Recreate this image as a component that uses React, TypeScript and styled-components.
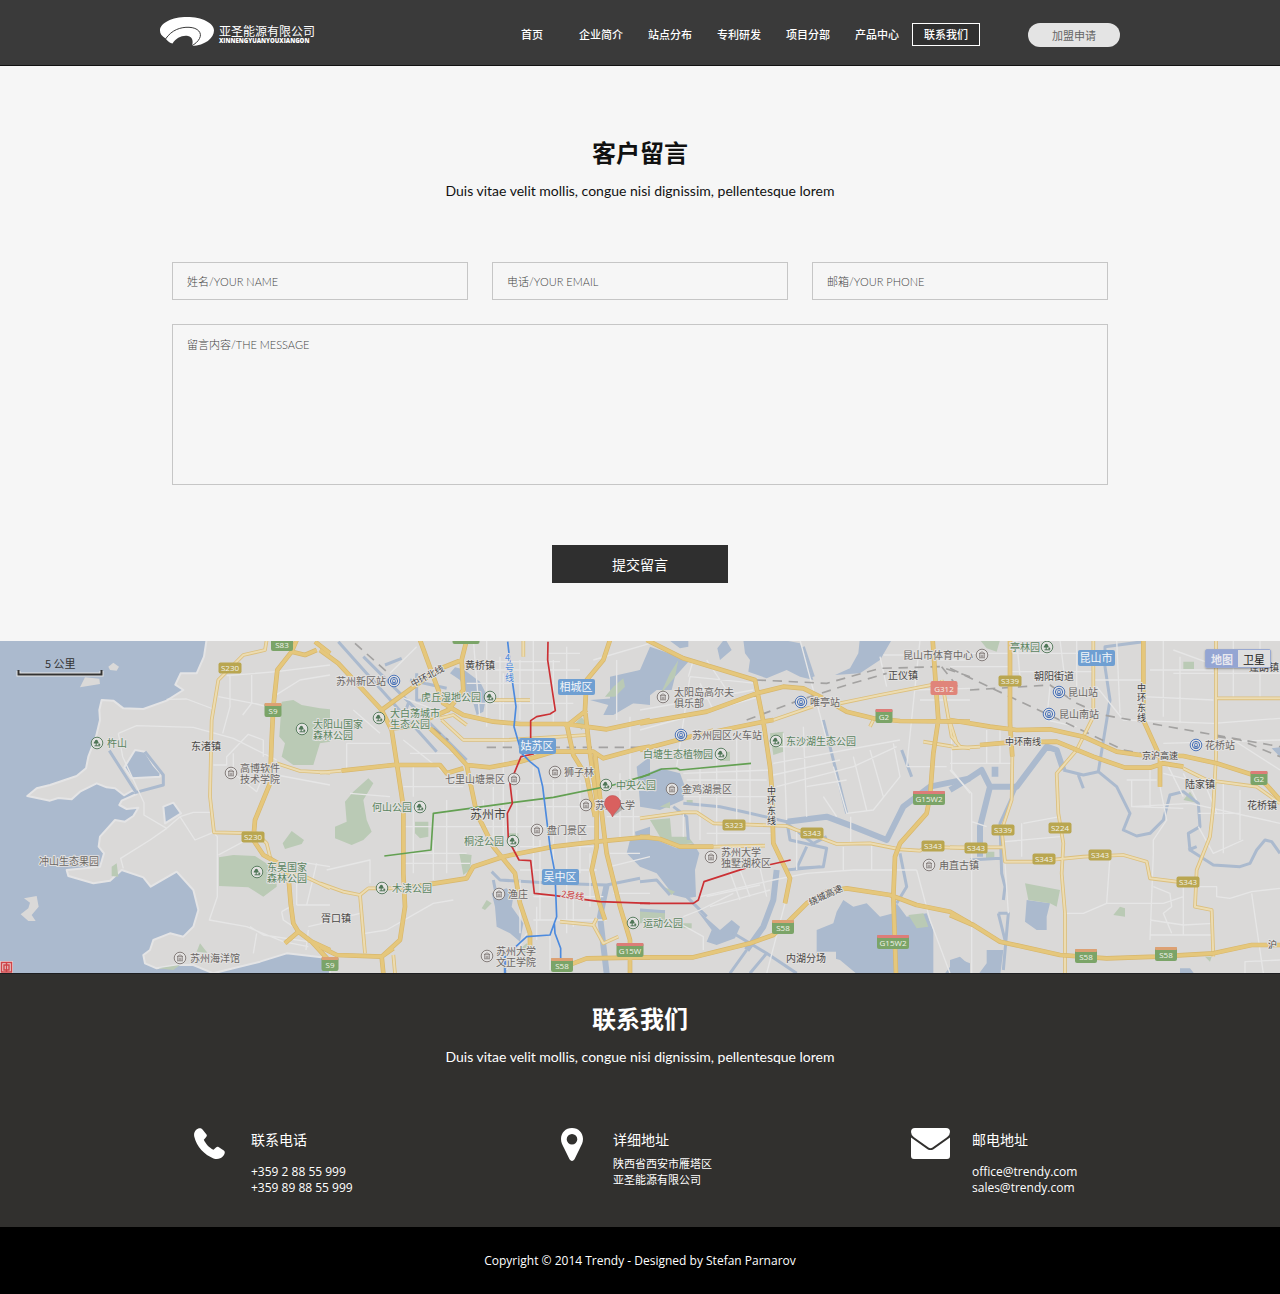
import React from "react";
import styled, { createGlobalStyle } from "styled-components";

const cjk = '"Noto Sans CJK SC", sans-serif';

const GlobalStyle = createGlobalStyle`
  *, *::before, *::after { box-sizing: border-box; }
  body {
    margin: 0;
    background: #000;
    font-family: "Open Sans", ${cjk};
    color: #111;
  }
  h1, h2, h3, p, ul { margin: 0; padding: 0; }
  button, input, textarea { font: inherit; }
  a { color: inherit; text-decoration: none; }
`;

/* ---------- header ---------- */

const Header = styled.header`
  display: flex;
  justify-content: center;
  height: 66px;
  background: #3a3a3a;
  border-bottom: 1px solid #111;
`;

const HeaderInner = styled.div`
  display: flex;
  align-items: center;
  width: 100%;
  max-width: 960px;
  padding-top: 4px;
`;

const Brand = styled.a`
  display: flex;
  align-items: center;
  gap: 5px;
  margin: 0 auto 6px 0;
  color: #fff;
`;

const BrandText = styled.span`
  display: flex;
  flex-direction: column;
  padding-top: 4px;
`;

const BrandName = styled.span`
  font: 12px/15px ${cjk};
`;

const BrandLatin = styled.span`
  font: 800 6px/7px "Open Sans", sans-serif;
`;

const Nav = styled.nav`
  display: flex;
  gap: 1px;
`;

const NavLink = styled.a<{ $active?: boolean }>`
  display: flex;
  align-items: center;
  justify-content: center;
  width: 68px;
  height: 23px;
  padding-bottom: 1px;
  border: 1px solid ${(p) => (p.$active ? "#fff" : "transparent")};
  background: ${(p) => (p.$active ? "#2f2f2f" : "none")};
  color: #fff;
  font: 500 11px/16px ${cjk};
`;

const JoinButton = styled.button`
  width: 92px;
  height: 24px;
  margin-left: 48px;
  padding: 0;
  border: 0;
  border-radius: 12px;
  background: #e4e4e4;
  color: #666;
  font: 11px/16px ${cjk};
  cursor: pointer;
`;

/* ---------- message form ---------- */

const SectionTitle = styled.h2`
  font: 700 24px/36px ${cjk};
  text-align: center;
`;

const SectionLead = styled.p`
  margin-top: 11px;
  font: 14px/20px Lato, sans-serif;
  text-align: center;
`;

const MessageSection = styled.section`
  padding: 68px 24px 58px;
  background: #f6f6f6;
`;

const Form = styled.form`
  display: grid;
  grid-template-columns: repeat(3, 1fr);
  gap: 24px;
  max-width: 936px;
  margin: 61px auto 0;
`;

const fieldStyle = `
  display: block;
  width: 100%;
  border: 1px solid #c6c6c6;
  border-radius: 0;
  background: transparent;
  color: #333;
  font: 300 11px/16px Lato, ${cjk};
  outline: none;
  &::placeholder { color: #444; opacity: 1; }
`;

const TextField = styled.input`
  ${fieldStyle}
  height: 38px;
  padding: 0 14px;
`;

const MessageArea = styled.textarea`
  ${fieldStyle}
  grid-column: 1 / -1;
  height: 161px;
  padding: 12px 14px;
  resize: none;
`;

const SubmitButton = styled.button`
  grid-column: 1 / -1;
  justify-self: center;
  width: 176px;
  height: 38px;
  margin-top: 36px;
  border: 0;
  background: #2f2f2f;
  color: #fff;
  font: 400 14px/20px ${cjk};
  cursor: pointer;
`;

/* ---------- map ---------- */

const MapSection = styled.section`
  position: relative;
  height: 332px;
  overflow: hidden;
  background: #dad9d8;
`;

const MapDrawing = styled.svg`
  display: block;
  width: 100%;
  height: 100%;
  font-family: ${cjk};
`;

const MapTypes = styled.div`
  position: absolute;
  top: 8px;
  right: 9px;
  display: flex;
  border: 1px solid #9aa9d0;
  border-radius: 2px;
  box-shadow: 0 1px 2px rgba(0, 0, 0, 0.3);
`;

const MapType = styled.button<{ $active?: boolean }>`
  width: 32px;
  height: 17px;
  padding: 0;
  border: 0;
  background: ${(p) => (p.$active ? "#94a5d3" : "#dfdfe0")};
  color: ${(p) => (p.$active ? "#e8e8ee" : "#222")};
  font: ${(p) => (p.$active ? 700 : 400)} 11px/16px ${cjk};
  cursor: pointer;
`;

/* Map geometry is kept as four sheets, drawn at three units per map pixel. */
type Layer =
  | "water" | "land" | "river" | "wide" | "green" | "minor"
  | "light" | "major" | "rail" | "blue" | "red" | "line";

type Sheet = { x: number } & Partial<Record<Layer, string>>;

const sheets: Sheet[] = [
  {
    x: 0,
    water:
      "M-9-9H621L612 50L590 100L542 100L526 134L550 150L500 182L430 207L370 205L340 182L305 180L298 210L300 240L288 290L265 350L258 385L230 408L150 435L110 445L82 468L150 482L175 474L215 478L240 455L290 430L320 442L345 445L372 466L400 450L410 462L365 482L358 495L380 507L415 503L400 528L375 545L345 540L300 590L296 620L312 640L300 680L200 690L205 708L280 730L330 722L365 690L430 712L452 740L530 695L580 750L595 810L580 860L550 890L510 880L460 900L450 930L430 945L435 970L470 985L530 975L580 975L640 1000L700 985L780 965L860 940L990 955V1010H-9ZM405 330L435 335L460 375L482 400L480 410L395 415L373 382ZM490 500L520 488L543 520L495 550Z",
    land: "M325 80L340 68L357 80L350 92L330 90ZM240 142L255 112L298 116L300 132ZM72 775L110 768L116 800L95 825L107 843L85 843L62 823L85 805L90 788Z",
    river: "M328 332L410 460M405 458L490 435V405L435 335",
    green:
      "M845 185L880 180L905 195L960 205L990 208V305L960 310L940 375L880 375L845 350L855 310L838 290ZM657 652L700 645L765 648L830 690V740L790 770L745 742L657 738ZM848 610L875 573L912 600L905 612L855 627ZM335 680L350 670L355 710L335 708ZM590 935L600 910L622 938ZM475 985L540 975L520 990Z",
    minor:
      "M500 178L560 177L640 207M355 280L410 257L580 262L700 295L830 360M355 280L368 350L432 488V525L500 565L540 530L580 517H635M500 565L450 600L362 655L370 685M540 530L585 600L640 577L652 590V770L628 840L740 860L850 905L925 920M690 107V200L668 280M755 105V190L728 225M655 170L770 192L820 205M680 107L830 95L990 75M820 170L900 120L990 105M640 375H680V350L745 283L790 300V350M700 340V400L770 455L800 380M830 405L990 435M655 645L730 605M890 795H990M950 670L920 795M890 665V795M845 815L880 795M845 815L850 840L880 860M750 860L790 885L925 905M770 880L760 940M925 860L990 845M895 665L990 680M925 870L918 930",
    light: "M800 0L795 30L730 45L655 120L635 240L630 470L642 577L770 580L800 610L810 650L830 690L920 712L990 745M830 370L900 393L990 398",
    major:
      "M890 0L875 35L832 90L820 200L815 300L810 430L765 540L760 600L790 645L835 670L865 705L872 790L880 850L895 875L935 905L990 965M855 910L895 875M875 35L915 45L950 30M945 5L990 40M925 900L990 930",
  },
  {
    x: 320,
    water:
      "M390 100L405 82L430 88L480 125L500 165L490 215L470 225L460 190L440 160L420 120ZM810 180L880 175L890 130L960 90L990 80V195L940 190L880 225L850 225L865 195ZM515 760L560 745L580 770L575 800L610 850L600 905L570 880L530 860L525 800ZM950 380L990 350V500L960 490L955 430ZM945 575L990 560V675L955 660Z",
    wide: "M860 735L840 830L860 1000",
    river:
      "M55 5L350 335M130 50L440 360M195 75L245 55M270 120L380 145M290 100V180L370 185M265 190L250 230M515 695L540 720L700 730L860 735L960 715M520 720L530 770M555 950V1000",
    green:
      "M75 485L100 455L145 415L160 430L130 480L140 540L155 575L130 600L95 615L45 595V560L80 545ZM285 545H325V590L300 595L285 580ZM418 640L455 645L450 690L430 705ZM485 805L500 780L515 790L495 810ZM855 170L880 140L910 115L915 140L885 170ZM565 580h30v32h-30ZM765 250l20-18 15 18-15 20ZM590 935L620 910L635 940Z",
    minor:
      "M80 310H210M80 310V390M250 300L400 420M460 0L480 240M500 0V260M550 100V600M600 60V240M640 0V250M680 40H780M440 130H700M441 65H720M250 440H430M250 560H560M280 490V700M340 600V720M380 480V700M250 670H450M480 560H830M640 380V700M590 450V640M740 380V880M780 420V700M600 690H830M660 600V840M640 840H860M500 430H840M540 50V240M270 340H400M280 380V470M850 450H990M860 530H990M870 640H960M900 400V600M940 500V600M640 770H850M650 800V900M620 880L560 990M20 690L150 660V730M0 850L120 820M135 880L200 870L340 790L400 780M255 640H440M700 60V250M740 20V250M520 90H780M460 190H760M490 480V560M520 440V620M700 420V700M810 640V800M870 680L990 650M880 760H990M620 500H820M600 620H820M210 100L290 20M240 170L400 230M100 210L180 280M90 460L210 470M600 720V880M690 880V990M760 760V860M930 230V420M890 60V240M820 60L990 10",
    light:
      "M0 730L70 755L120 765L145 745L250 745M120 765L135 940M220 945L225 1000M720 845L820 855L830 835M820 855L850 910L895 890M365 240L430 300L560 300L800 285M360 235L400 225L440 255M500 180H630M610 0V50M0 398L65 392",
    major:
      "M0 30L55 70L185 210L215 270L235 400L250 500L250 700L255 800L240 900L185 950L190 1000M185 210L350 90L425 60L440 0M425 60L430 150L385 210L270 260L215 265M300 0L340 110L370 190L430 225L520 245L600 252L740 252L860 268L990 240M330 265L390 320L440 375L510 382L600 365L700 335L820 335L850 355L960 325L990 320M65 392L220 375L360 375L380 400L430 385M440 375L470 520L520 620L585 700L600 790L630 880V960M870 0L850 60L800 120L795 210L810 340L830 480V620L815 690L835 780L855 840M735 262L800 210M740 252L760 345L800 410L825 530M825 340L850 560L860 640L900 800L930 900V1000M250 745L440 715L460 680L550 650L700 620L830 605L990 590M0 920L50 945L185 950L220 925M720 985L800 955L990 952",
    blue: "M563 5L575 110L588 200L582 260L605 340L630 365L655 385L668 440L690 620L705 700L710 830L690 885L620 890L555 950V1000M703 850L705 880L722 925V960",
    red: "M684 5L683 60L706 212L690 222L650 230L632 242V300L640 342L603 350L570 430L577 490L562 520L565 600L597 660L632 662L643 760L700 766L840 785L990 790",
    line: "M193 648L333 630L340 520L560 490L700 472L880 435L990 403",
    rail: "M105 10L200 95M340 265L385 300M500 322H990",
  },
  {
    x: 640,
    water:
      "M30 20L130 55L150 60L105 110L95 150L50 150L0 190L-90 190V110L0 90ZM310 0H430L480 10L500 60L520 120L480 110L440 90L380 115L325 95L330 60L315 40ZM585 105L630 85L655 40L660-9H760L720 60L660 100ZM240 60L232 25L255-5L275 30ZM80-5H145V20L120 25ZM0 460L20 400L60 385L120 400L135 440L130 480L60 510L0 500ZM-30 600L50 600L110 625L160 610L178 640L165 690L168 770L140 775L100 765L50 700L0 680L-40 640ZM170 810L200 835L240 870L275 840L300 860L285 895L230 915L200 905L215 870ZM530 870L580 850L590 815L610 780L640 800L680 790L720 830L760 820L770 790L800 830L860 820L880 870V1010H660L600 960L530 940ZM915 1000L950 955L990 970V1010Z",
    land: "M530 935h58v30h-45Z",
    wide: "M440 545L560 530L640 560L740 600L790 500L870 440L990 415M410 690L400 780L370 860L320 930",
    river:
      "M130 490L240 500L310 515L440 545M440 540L450 600L560 625L550 680L470 685L500 620M440 550L520 610L560 590M785 330L815 410M550 240L620 520M440 690L540 680M780 640L800 740L770 790M490 20L520 110M100 500L140 530L145 600M320 930L270 1000M280 880L380 940L470 1000M380 940L330 1000M140 770L200 830M0 725L50 720L90 765M0 810L75 815",
    green:
      "M105 110L115 60L90 100L60 165ZM390 280L430 275V335L400 345ZM30 540L90 535L95 590L145 590L160 610L110 615L60 590ZM0 812L75 810V845L0 850ZM805 825L850 820L865 860L830 865ZM60 500l30-15v20ZM140 480h18v14h-18ZM240 335h30v28h-30ZM70 740l35 15-10 10ZM120 850h35v15h-35Z",
    minor:
      "M150 110L110 380M180 380V600M230 330V620M290 290V540M330 270V560M140 420H380M130 470H390M410 320H500M400 370L780 300M410 440L640 380L770 320M580 380L620 520L700 510L780 410L760 310M430 280L440 540M490 260L500 530M150 110L350 130M0 210L340 150M200 580H400M250 640L300 780M180 770L400 720L500 700L640 690L830 690M350 640L380 770M470 570V690M610 620V690M695 610V690M550 470L590 530M632 530V605M830 690L870 840L930 1000M130 830L180 810L280 760M100 840L190 890V930M435 790L380 1000M810 150L990 145M840 0L800 380M800 380H920M720 50L740 140M935 250V390L990 460M900 60H990M480 0L560 300M400 405L600 360M640 350L680 510M690 330L730 470M500 440L620 420M160 60L145 110M180 130L220 210M0 270L360 170M130 400L390 390M130 520V590M200 770L360 735M210 800L390 750M300 690L330 770M260 150L200 60M730 45H990M840 180H990",
    light:
      "M400 240L560 185M600 190L720 165L900 130M0 535L130 517H170L220 550L440 558L470 570L545 595L590 612L690 610L780 628L840 632L860 620L990 625M220 620L375 617M905 120L935 290L960 320L990 325M850 305L940 320M150 290L220 270M690 260L700 240",
    major:
      "M20 0L130 55L345 120L370 245L390 380L395 440L400 610L450 715L435 790M0 250L200 215L350 160L430 140L490 145L550 175L620 215L700 235L780 243L990 245M0 330L150 290L370 245L400 240M878 0L885 100L895 240L880 340L870 470L860 520L780 610L765 650L760 770L768 1000M0 590L60 597L120 620L220 620M-10 952H160L330 910L400 885L450 840L500 790L560 755L620 745L750 765L830 795L930 815L990 850",
    red: "M0 790H160L175 780L192 725L330 680M385 675L452 660",
    line: "M0 413L65 387L110 385L120 390L333 370",
    rail: "M350 120L560 130L720 85L900 80L990 110M320 240L480 180L620 135L740 100M60 20L150 60M905 80L960 150",
  },
  {
    x: 950,
    water:
      "M230 780L300 790L290 830L290 870L260 870L225 845ZM110 930L160 930L150 1010H80L110 970ZM0 960L30 950L52 970V1010H0ZM125 380h20v30h-20ZM115 0L145 5L130 30ZM965 325L990 322V350ZM690 985H720L740 1010H690Z",
    wide: "M0 450L50 420L95 390L120 440L200 440L290 320L320 330L340 390M120 440L90 560V650",
    river:
      "M340 390L400 405L445 395L500 440L540 520L520 570L560 588L600 580L640 540L660 465L700 455L745 490L750 560L715 580L720 630L790 675L870 680L900 670L920 630L945 600L965 605L990 640M200 440L150 550L155 700L165 740L160 780M445 395L480 180L465 80V20L580 5M145 820L175 820L160 990M385 405L400 445M145 820L165 900M715 630L740 620M60 660L150 655",
    green:
      "M225 730L330 750L320 800L300 790L235 780ZM90 0H150L140 35L110 25ZM490 825L510 800L525 805V830ZM700 65h32v22h-32ZM700 480L720 455L740 488ZM108 635h25v20h-25ZM765 950h20l-5 15Z",
    minor:
      "M0 370H190M0 390L65 460V1000M65 545L110 560M220 550L330 530M215 550V650M165 605L330 590M340 820L400 820L470 790H640L700 770M480 650L470 790M630 440L650 540L610 600V640L600 900M610 740L660 760L665 800L640 820L665 880M600 885H790M600 840L700 855L790 850M700 735V885M545 420V500L720 490L990 550M545 500L700 505M600 390V500M745 520H870M820 430V640M870 450V600M745 560L790 640L880 600M690 50V250M440 140L520 240L790 250L990 235M0 80H180M180 95H430M430 120H580M0 40H430M640 0V230M670 100H990M850 0V170M930 0V170M500 0L510 220M600 90H790M640 310L990 300M200 0L210 110M300 140L290 240L380 260M110 270V370M150 270V370M905 760L940 1000M750 740H800V770L840 775L905 755L990 745M885 1000V965L990 960M330 0L345 120M380 0V140M700 400L740 480M760 420L800 520M640 400L760 430M650 370L700 470M530 420H620M670 30L780 70M580 170L790 180M700 740L750 735M850 300L990 390M165 670L175 820",
    light:
      "M187 350L185 480L155 570L165 665L250 665L400 650L520 645L590 665L600 715L720 730M0 622H160M430 0V230L380 330L320 400L325 520L340 610L335 700L345 820V1000M798 0V350L790 500L780 590L740 690L735 800L785 810L790 950M798 175H990M700 385L770 420L920 440L990 490M0 245L20 310M5 325L90 320",
    major:
      "M180 0V250L187 350M0 240L120 260L200 270L300 268L400 290L500 335L570 345L700 348L800 370L910 405L950 435L990 480M90 315L180 307L320 305L430 350L525 383H600L640 370L700 380M580 0V240L630 350V440M0 825L70 855L150 905L330 945L470 955L620 950L790 940L905 915H990",
    rail: "M0 85L190 175L330 240L520 330L600 345M60 150L300 135L380 190L460 225L990 320M800 290L870 300L990 350",
  },
];

const strokes: { layer: Layer; color: string; width: number; dash?: string }[] = [
  { layer: "wide", color: "#abbace", width: 18 },
  { layer: "river", color: "#abbace", width: 9 },
  { layer: "minor", color: "#e6e6e6", width: 4 },
  { layer: "rail", color: "#a3a2a1", width: 5, dash: "28 20" },
  { layer: "light", color: "#dcbf7c", width: 11 },
  { layer: "light", color: "#ecdcb2", width: 6 },
  { layer: "major", color: "#d8b76c", width: 14 },
  { layer: "major", color: "#e5c77c", width: 10 },
  { layer: "line", color: "#63a052", width: 5 },
  { layer: "red", color: "#cb3034", width: 5 },
  { layer: "blue", color: "#4c8ade", width: 5 },
];

type Tone = "dark" | "grey" | "green";
type PinKind = "tree" | "rail" | "sight";
type Place = {
  x: number; y: number; text: string; next?: string; tone?: Tone;
  pin?: number; kind?: PinKind; size?: number; rotate?: number;
};

const tones: Record<Tone, string> = { dark: "#4a4846", grey: "#6b6765", green: "#5b8560" };
const pinColors: Record<PinKind, string> = { tree: "#4f7657", rail: "#3f6bb5", sight: "#7b7371" };

const places: Place[] = [
  { x: 107, y: 102, text: "杵山", tone: "green", pin: 97, kind: "tree" },
  { x: 191, y: 105, text: "东渚镇", tone: "dark" },
  { x: 240, y: 127, text: "高博软件", next: "技术学院", pin: 231, kind: "sight" },
  { x: 313, y: 83, text: "大阳山国家", next: "森林公园", tone: "green", pin: 302, kind: "tree" },
  { x: 39, y: 220, text: "冲山生态果园" },
  { x: 267, y: 226, text: "东吴国家", next: "森林公园", tone: "green", pin: 257, kind: "tree" },
  { x: 190, y: 317, text: "苏州海洋馆", pin: 180, kind: "sight" },
  { x: 321, y: 277, text: "胥口镇", tone: "dark" },
  { x: 336, y: 40, text: "苏州新区站", pin: 394, kind: "rail" },
  { x: 411, y: 43, text: "中环北线", tone: "dark", size: 9, rotate: -28 },
  { x: 465, y: 24, text: "黄桥镇", tone: "dark" },
  { x: 421, y: 56, text: "虎丘湿地公园", tone: "green", pin: 490, kind: "tree" },
  { x: 390, y: 72, text: "大白荡城市", next: "生态公园", tone: "green", pin: 379, kind: "tree" },
  { x: 445, y: 138, text: "七里山塘景区", pin: 514, kind: "sight" },
  { x: 564, y: 131, text: "狮子林", pin: 555, kind: "sight" },
  { x: 616, y: 144, text: "中央公园", tone: "green", pin: 606, kind: "tree" },
  { x: 372, y: 166, text: "何山公园", tone: "green", pin: 420, kind: "tree" },
  { x: 470, y: 174, text: "苏州市", tone: "dark", size: 12 },
  { x: 595, y: 164, text: "苏州大学", pin: 586, kind: "sight" },
  { x: 547, y: 189, text: "盘门景区", pin: 537, kind: "sight" },
  { x: 464, y: 200, text: "桐泾公园", tone: "green", pin: 513, kind: "tree" },
  { x: 508, y: 253, text: "渔庄", pin: 499, kind: "sight" },
  { x: 392, y: 247, text: "木渎公园", tone: "green", pin: 382, kind: "tree" },
  { x: 496, y: 310, text: "苏州大学", next: "文正学院", pin: 487, kind: "sight" },
  { x: 643, y: 282, text: "运动公园", tone: "green", pin: 633, kind: "tree" },
  { x: 674, y: 51, text: "太阳岛高尔夫", next: "俱乐部", pin: 663, kind: "sight" },
  { x: 810, y: 61, text: "唯亭站", pin: 801, kind: "rail" },
  { x: 692, y: 94, text: "苏州园区火车站", pin: 681, kind: "rail" },
  { x: 643, y: 113, text: "白塘生态植物园", tone: "green", pin: 721, kind: "tree" },
  { x: 786, y: 100, text: "东沙湖生态公园", tone: "green", pin: 776, kind: "tree" },
  { x: 682, y: 148, text: "金鸡湖景区", pin: 672, kind: "sight" },
  { x: 721, y: 211, text: "苏州大学", next: "独墅湖校区", pin: 711, kind: "sight" },
  { x: 809, y: 261, text: "绕城高速", tone: "dark", size: 9, rotate: -25 },
  { x: 786, y: 317, text: "内湖分场", tone: "dark" },
  { x: 903, y: 14, text: "昆山市体育中心", pin: 982, kind: "sight" },
  { x: 888, y: 34, text: "正仪镇", tone: "dark" },
  { x: 939, y: 224, text: "甪直古镇", pin: 929, kind: "sight" },
  { x: 1010, y: 6, text: "亭林园", tone: "green", pin: 1047, kind: "tree" },
  { x: 1034, y: 35, text: "朝阳街道", tone: "dark" },
  { x: 1068, y: 51, text: "昆山站", pin: 1059, kind: "rail" },
  { x: 1059, y: 73, text: "昆山南站", pin: 1049, kind: "rail" },
  { x: 1005, y: 100, text: "中环南线", tone: "dark", size: 9 },
  { x: 1142, y: 114, text: "京沪高速", tone: "dark", size: 9 },
  { x: 1205, y: 104, text: "花桥站", pin: 1196, kind: "rail" },
  { x: 1185, y: 143, text: "陆家镇", tone: "dark" },
  { x: 1247, y: 164, text: "花桥镇", tone: "dark" },
  { x: 1249, y: 26, text: "蓬朗镇", tone: "dark" },
  { x: 1268, y: 303, text: "沪", tone: "dark", size: 9 },
];

const stacked = [
  { x: 767, y: 150, text: "中环东线", color: "#3d3d3d" },
  { x: 1137, y: 47, text: "中环东线", color: "#3d3d3d" },
  { x: 505, y: 17, text: "4号线", color: "#4c8ade" },
];

type RoadSign = { x: number; y: number; code: string; kind?: "province" | "nation" | "national" };
const signs: RoadSign[] = [
  { x: 282, y: 3, code: "S83", kind: "province" },
  { x: 466, y: -4, code: "G15W", kind: "province" },
  { x: 230, y: 27, code: "S230" },
  { x: 273, y: 69, code: "S9", kind: "province" },
  { x: 253, y: 196, code: "S230" },
  { x: 330, y: 323, code: "S9", kind: "province" },
  { x: 562, y: 324, code: "S58", kind: "province" },
  { x: 630, y: 309, code: "G15W", kind: "nation" },
  { x: 884, y: 75, code: "G2", kind: "nation" },
  { x: 944, y: 47, code: "G312", kind: "national" },
  { x: 929, y: 157, code: "G15W2", kind: "nation" },
  { x: 734, y: 184, code: "S323" },
  { x: 812, y: 192, code: "S343" },
  { x: 783, y: 286, code: "S58", kind: "province" },
  { x: 893, y: 301, code: "G15W2", kind: "nation" },
  { x: 933, y: 205, code: "S343" },
  { x: 976, y: 207, code: "S343" },
  { x: 1010, y: 40, code: "S339" },
  { x: 1003, y: 189, code: "S339" },
  { x: 1060, y: 187, code: "S224" },
  { x: 1044, y: 218, code: "S343" },
  { x: 1100, y: 214, code: "S343" },
  { x: 1188, y: 241, code: "S343" },
  { x: 1259, y: 137, code: "G2", kind: "nation" },
  { x: 1086, y: 315, code: "S58", kind: "province" },
  { x: 1166, y: 313, code: "S58", kind: "province" },
];

const districts = [
  { x: 576, y: 46, name: "相城区" },
  { x: 537, y: 105, name: "姑苏区" },
  { x: 560, y: 236, name: "吴中区" },
  { x: 1096, y: 17, name: "昆山市" },
];

const Sign = ({ x, y, code, kind }: RoadSign) => {
  const w = code.length * 5 + (kind ? 7 : 3);
  const h = kind ? 14 : 11;
  const fill = !kind ? "#b9a650" : kind === "national" ? "#e0857a" : "#7ba468";
  return (
    <g>
      <rect x={x - w / 2} y={y - h / 2} width={w} height={h} rx="2" fill={fill} />
      {(kind === "nation" || kind === "province") && (
        <rect x={x - w / 2} y={y - h / 2} width={w} height="3" rx="1" fill={kind === "nation" ? "#dd7d78" : "#dda173"} />
      )}
      <text x={x} y={y + (kind ? 4 : 3)} fill="#f2f2ea" fontSize="8" fontFamily="Open Sans, sans-serif" textAnchor="middle">
        {code}
      </text>
    </g>
  );
};

const Pin = ({ x, y, kind }: { x: number; y: number; kind: PinKind }) => (
  <g transform={`translate(${x} ${y})`} stroke={pinColors[kind]} fill="none">
    <circle r="5.8" fill="#e3e2e1" strokeWidth="0.9" />
    {kind === "tree" && (
      <>
        <path d="M-3.300.4Q-3.300-1.200-2.300-1.400Q-2.200-3.300-.6-3.300Q1-3.300 1-1.500Q1.800-1 1.600.4Z" fill={pinColors.tree} stroke="none" />
        <path d="M-.8 0V2.800M-2.500 2.800H3.200" strokeWidth="1" />
        <circle cx="2.300" cy="1.600" r="1" fill={pinColors.tree} stroke="none" />
      </>
    )}
    {kind === "rail" && (
      <>
        <circle r="3.600" strokeWidth="1" />
        <path d="M-1.300 1.500V-.6a1.300 1.300 0 0 1 2.600 0V1.500ZM-2 3H2" strokeWidth="0.9" />
      </>
    )}
    {kind === "sight" && <path d="M-3-1.300L0-3.200 3-1.300ZM-2.300-.8V2.400M2.300-.8V2.400M-.8 0V2.400M.8 0V2.400M-3 2.800H3" strokeWidth="0.8" />}
  </g>
);

const CityMap = () => (
  <MapDrawing viewBox="0 0 1280 332" preserveAspectRatio="xMidYMid slice" role="img" aria-label="苏州市地图">
    <rect width="1280" height="332" fill="#dad9d8" />
    {sheets.map((s) => (
      <g key={s.x} transform={`translate(${s.x} -1) scale(0.33333)`} strokeLinejoin="round">
        <path d={s.water} fill="#abbace" stroke="#e4e4e5" strokeWidth={s.x === 0 ? 6 : 0} />
        {s.land && <path d={s.land} fill="#dad9d8" />}
      </g>
    ))}
    {sheets.map((s) => (
      <path key={s.x} d={s.green} fill="#bacab5" transform={`translate(${s.x} -1) scale(0.33333)`} />
    ))}
    {strokes.map((k, i) => (
      <g key={i} fill="none" stroke={k.color} strokeWidth={k.width} strokeDasharray={k.dash} strokeLinejoin="round">
        {sheets.map(
          (s) => s[k.layer] && <path key={s.x} d={s[k.layer]} transform={`translate(${s.x} -1) scale(0.33333)`} />
        )}
      </g>
    ))}
    {signs.map((s) => (
      <Sign key={`${s.x}-${s.y}`} {...s} />
    ))}
    <g stroke="#e2e1e0" strokeWidth="2" strokeLinejoin="round" paintOrder="stroke">
      {places.map((p) => (
        <text
          key={`${p.x}-${p.y}`}
          fill={tones[p.tone ?? "grey"]}
          fontSize={p.size ?? 10}
          x={p.x}
          y={p.y + 4}
          transform={p.rotate ? `rotate(${p.rotate} ${p.x} ${p.y})` : undefined}
        >
          {p.text}
          {p.next && <tspan x={p.x} dy="11">{p.next}</tspan>}
        </text>
      ))}
      {stacked.map((s) => (
        <text key={s.x} fill={s.color} fontSize="9">
          {s.text.split("").map((c, i) => (
            <tspan key={i} x={s.x} y={s.y + i * 10 + 3}>{c}</tspan>
          ))}
        </text>
      ))}
      <text x="561" y="256" fill="#cb3034" fontSize="9" transform="rotate(8 561 256)">2号线</text>
    </g>
    {places.map((p) => p.pin && <Pin key={p.pin} x={p.pin} y={p.next ? p.y + 5 : p.y} kind={p.kind!} />)}
    {districts.map((d) => (
      <g key={d.name}>
        <rect x={d.x - 18} y={d.y - 8} width="37" height="16" rx="2" fill="#6f9fd2" />
        <text x={d.x} y={d.y + 4} fill="#f4f6f8" fontSize="11" textAnchor="middle">{d.name}</text>
      </g>
    ))}
    <path d="M612 176L622 169Q624 165 618 164Z" fill="#000" opacity="0.2" />
    <path d="M612.500 176C611 171 604.500 168 604.500 162.500A8 8 0 0 1 620.500 162.500C620.500 168 614 171 612.500 176Z" fill="#d9605f" stroke="#c24f50" strokeWidth="0.6" />
    <path d="M18.500 30V33.500H101.500V30" fill="none" stroke="#e6e6e6" strokeWidth="4" />
    <path d="M18.500 29V33.500H101.500V29" fill="none" stroke="#333" strokeWidth="2" />
    <text x="45" y="27" fill="#333" fontSize="11">5 公里</text>
    <rect x="-4" y="320" width="17" height="12" fill="#e8d5d4" />
    <path d="M1.500 321.500H11.500V331H1.500ZM4 324H9V329H4ZM6.500 322V331" fill="none" stroke="#cf4347" strokeWidth="1.500" />
  </MapDrawing>
);

/* ---------- contact ---------- */

const ContactSection = styled.section`
  padding: 26px 24px 31px;
  border-top: 1px solid #1d1e20;
  background: #31302e;
  color: #fff;
`;

const ContactGrid = styled.div`
  display: grid;
  grid-template-columns: 367fr 350fr 175fr;
  max-width: 892px;
  margin: 61px auto 0;
`;

const ContactItem = styled.div<{ $iconWidth: number }>`
  display: grid;
  grid-template-columns: ${(p) => p.$iconWidth}px auto;
  justify-content: start;
  align-items: start;
`;

const ContactTitle = styled.h3`
  font: 400 14px/22px ${cjk};
`;

const ContactLines = styled.address<{ $latin?: boolean }>`
  display: flex;
  flex-direction: column;
  margin-top: ${(p) => (p.$latin ? 14 : 5)}px;
  font: normal ${(p) => (p.$latin ? `12px/16px "Open Sans", ` : "11px/16px ")} ${cjk};
`;

const Footer = styled.footer`
  padding: 25px 24px 23px;
  background: #000;
  color: #fff;
  font: 12px/18px "Open Sans", ${cjk};
  text-align: center;
`;

const Logo = () => (
  <svg width="54" height="29" viewBox="0 0 54 29" aria-hidden="true">
    <path d="M5.500 21.500C1.500 19 0 16.500 0 13.500C0 6 12 0 27 0S54 6 54 13.500C54 21 45 28.500 32 29C33.500 24 32.500 20 28 19C22 18 16 21 12.500 26.500C10 26 8 24.500 5.500 21.500Z" fill="#fff" />
    <path d="M5.500 22C12 12.500 21 10 29 10.300C38 10.600 42.500 16 39.500 21.500C38 24.500 35 27 31.500 29" fill="none" stroke="#3a3a3a" strokeWidth="1" />
  </svg>
);

const PhoneIcon = () => (
  <svg width="31" height="31" viewBox="0 0 31 31" fill="#fff" aria-hidden="true">
    <path d="M2 2C4 0 7-.5 8.500 1.500L12.500 6.500C13.300 7.800 12.800 8.600 9.800 11.800C11.500 15.500 15 19.800 19.500 21.800C22.500 18.600 23.300 18.200 24.500 19L29.800 22.600C31.400 23.800 31 26 29 28.200C26.500 31 23 31.600 19.500 30.400C10.500 27 2.500 18.500.3 8.800C-.3 5.800.3 3.800 2 2Z" />
  </svg>
);

const PlaceIcon = () => (
  <svg width="22" height="33" viewBox="0 0 22 33" fill="#fff" aria-hidden="true">
    <path fillRule="evenodd" d="M11 0C17.500 0 22 4.800 22 11C22 14.500 20.500 17 19 20L13.500 31.300Q11 34.500 8.500 31.300L3 20C1.500 17 0 14.500 0 11C0 4.800 4.500 0 11 0ZM11 6A5.300 5.300 0 1 0 11 16.600A5.300 5.300 0 1 0 11 6Z" />
  </svg>
);

const MailIcon = () => (
  <svg width="39" height="31" viewBox="0 0 39 31" fill="#fff" aria-hidden="true">
    <path d="M4 0H35Q39 0 39 4Q39 7 36 9.200L21.500 19.500Q19.500 21 17.500 19.500L3 9.200Q0 7 0 4Q0 0 4 0Z" />
    <path d="M0 9.500L16.500 21.200Q19.500 23 22.500 21.200L39 9.500V28Q39 31 36 31H3Q0 31 0 28Z" />
  </svg>
);

const navItems = ["首页", "企业简介", "站点分布", "专利研发", "项目分部", "产品中心", "联系我们"];
const lead = "Duis vitae velit mollis, congue nisi dignissim, pellentesque lorem";

export default function App() {
  return (
    <>
      <GlobalStyle />
      <Header>
        <HeaderInner>
          <Brand href="#">
            <Logo />
            <BrandText>
              <BrandName>亚圣能源有限公司</BrandName>
              <BrandLatin>XINNENGYUANYOUXIANGON</BrandLatin>
            </BrandText>
          </Brand>
          <Nav>
            {navItems.map((item, i) => (
              <NavLink key={item} href="#" $active={i === navItems.length - 1}>{item}</NavLink>
            ))}
          </Nav>
          <JoinButton type="button">加盟申请</JoinButton>
        </HeaderInner>
      </Header>
      <main>
        <MessageSection>
          <SectionTitle>客户留言</SectionTitle>
          <SectionLead>{lead}</SectionLead>
          <Form onSubmit={(e) => e.preventDefault()}>
            <TextField type="text" aria-label="姓名" placeholder="姓名/YOUR NAME" />
            <TextField type="text" aria-label="电话" placeholder="电话/YOUR EMAIL" />
            <TextField type="text" aria-label="邮箱" placeholder="邮箱/YOUR PHONE" />
            <MessageArea aria-label="留言内容" placeholder="留言内容/THE MESSAGE" />
            <SubmitButton type="submit">提交留言</SubmitButton>
          </Form>
        </MessageSection>
        <MapSection>
          <CityMap />
          <MapTypes>
            <MapType type="button" $active>地图</MapType>
            <MapType type="button">卫星</MapType>
          </MapTypes>
        </MapSection>
        <ContactSection>
          <SectionTitle>联系我们</SectionTitle>
          <SectionLead>{lead}</SectionLead>
          <ContactGrid>
            <ContactItem $iconWidth={57}>
              <PhoneIcon />
              <div>
                <ContactTitle>联系电话</ContactTitle>
                <ContactLines $latin>
                  <span>+359 2 88 55 999</span>
                  <span>+359 89 88 55 999</span>
                </ContactLines>
              </div>
            </ContactItem>
            <ContactItem $iconWidth={52}>
              <PlaceIcon />
              <div>
                <ContactTitle>详细地址</ContactTitle>
                <ContactLines>
                  <span>陕西省西安市雁塔区</span>
                  <span>亚圣能源有限公司</span>
                </ContactLines>
              </div>
            </ContactItem>
            <ContactItem $iconWidth={61}>
              <MailIcon />
              <div>
                <ContactTitle>邮电地址</ContactTitle>
                <ContactLines $latin>
                  <a href="mailto:office@trendy.com">office@trendy.com</a>
                  <a href="mailto:sales@trendy.com">sales@trendy.com</a>
                </ContactLines>
              </div>
            </ContactItem>
          </ContactGrid>
        </ContactSection>
      </main>
      <Footer>Copyright © 2014 Trendy - Designed by Stefan Parnarov</Footer>
    </>
  );
}
